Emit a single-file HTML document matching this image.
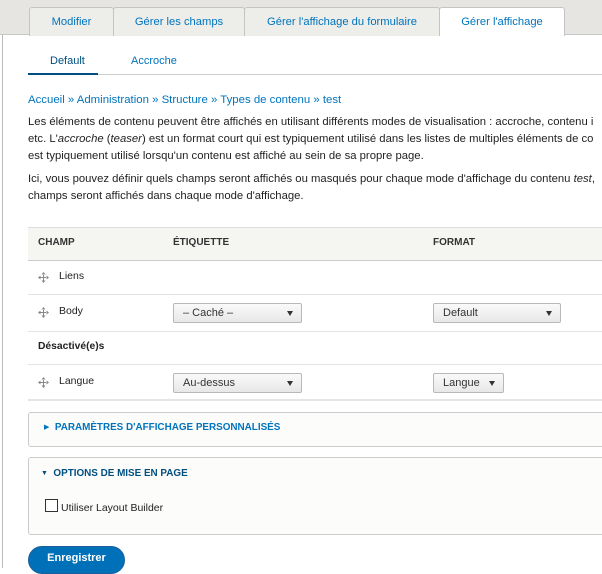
<!DOCTYPE html>
<html><head><meta charset="utf-8"><style>
*{box-sizing:border-box;margin:0;padding:0}
body{width:602px;height:568px;overflow:hidden;background:#fff;font-family:"Liberation Sans","DejaVu Sans",sans-serif;font-size:10.5px;color:#222;position:relative}
.a{position:absolute;white-space:nowrap}
.top{position:absolute;left:0;top:0;width:602px;height:35px;background:#e6e5e1;border-bottom:1px solid #c8c8c8}
.tab{position:absolute;top:7px;height:29px;border:1px solid #c4c4c4;border-bottom:none;background:#ededea;color:#0074bd;font-size:11.2px;text-align:center;line-height:28px;border-radius:3px 3px 0 0}
.tab.on{background:#fff;height:29px}
.blue{color:#0074bd}
.th{font-weight:bold;font-size:10px;color:#333}
.sel{position:absolute;height:20px;border:1px solid #b8b8b8;border-radius:2px;background:linear-gradient(#fafafa,#e8e8e8);font-size:11px;line-height:18px;padding-left:9px;color:#333}
.sel:after{content:"";position:absolute;right:8px;top:7px;border-left:3px solid transparent;border-right:3px solid transparent;border-top:5px solid #333}
.line{position:absolute;left:28px;width:574px;height:1px;background:#e2e2de}
.drag{position:absolute;width:11px;height:11px}
.box{position:absolute;left:28px;width:580px;border:1px solid #ccc;border-radius:3px;background:#fcfcfa}
</style></head><body>
<div class="a" style="left:2px;top:0;width:1px;height:568px;background:#bbb"></div>
<div class="top"></div>
<div class="tab" style="left:29px;width:85px">Modifier</div>
<div class="tab" style="left:113px;width:132px">Gérer les champs</div>
<div class="tab" style="left:244px;width:196px">Gérer l'affichage du formulaire</div>
<div class="tab on" style="left:439px;width:126px">Gérer l'affichage</div>

<div class="a" style="left:28px;top:74px;width:574px;height:1px;background:#ccc"></div>
<div class="a" style="left:28px;top:73px;width:70px;height:2px;background:#004f80"></div>
<div class="a" style="left:50px;top:55px;font-size:11px;color:#004f80">Default</div>
<div class="a blue" style="left:131px;top:55px;font-size:11px">Accroche</div>

<div class="a blue" style="left:28px;top:94px;font-size:11.4px">Accueil » Administration » Structure » Types de contenu » test</div>
<div class="a" style="left:28px;top:114px;line-height:17px;font-size:11.3px">Les éléments de contenu peuvent être affichés en utilisant différents modes de visualisation : accroche, contenu i<br>etc. L'<i>accroche</i> (<i>teaser</i>) est un format court qui est typiquement utilisé dans les listes de multiples éléments de co<br>est typiquement utilisé lorsqu'un contenu est affiché au sein de sa propre page.</div>
<div class="a" style="left:28px;top:171px;line-height:17px;font-size:11.3px">Ici, vous pouvez définir quels champs seront affichés ou masqués pour chaque mode d'affichage du contenu <i>test</i>,<br>champs seront affichés dans chaque mode d'affichage.</div>

<div class="a" style="left:28px;top:227px;width:574px;height:34px;background:#f5f5f2;border-top:1px solid #ddd;border-bottom:1px solid #ccc"></div>
<div class="a th" style="left:38px;top:237px">CHAMP</div>
<div class="a th" style="left:173px;top:237px">ÉTIQUETTE</div>
<div class="a th" style="left:433px;top:237px">FORMAT</div>

<svg class="drag" style="left:38px;top:272px" viewBox="0 0 11 11"><path d="M5.5 0L3.5 2.5H7.5ZM5.5 11L3.5 8.5H7.5ZM0 5.5L2.5 3.5V7.5ZM11 5.5L8.5 3.5V7.5ZM5 2h1v7H5ZM2 5h7v1H2Z" fill="#888"/></svg>
<div class="a" style="left:59px;top:270px">Liens</div>
<div class="line" style="top:294px"></div>
<svg class="drag" style="left:38px;top:307px" viewBox="0 0 11 11"><path d="M5.5 0L3.5 2.5H7.5ZM5.5 11L3.5 8.5H7.5ZM0 5.5L2.5 3.5V7.5ZM11 5.5L8.5 3.5V7.5ZM5 2h1v7H5ZM2 5h7v1H2Z" fill="#888"/></svg>
<div class="a" style="left:59px;top:305px">Body</div>
<div class="sel" style="left:173px;top:303px;width:129px">– Caché –</div>
<div class="sel" style="left:433px;top:303px;width:128px">Default</div>
<div class="line" style="top:331px"></div>
<div class="a" style="left:38px;top:341px;font-weight:bold;font-size:10.3px">Désactivé(e)s</div>
<div class="line" style="top:364px"></div>
<svg class="drag" style="left:38px;top:377px" viewBox="0 0 11 11"><path d="M5.5 0L3.5 2.5H7.5ZM5.5 11L3.5 8.5H7.5ZM0 5.5L2.5 3.5V7.5ZM11 5.5L8.5 3.5V7.5ZM5 2h1v7H5ZM2 5h7v1H2Z" fill="#888"/></svg>
<div class="a" style="left:59px;top:375px">Langue</div>
<div class="sel" style="left:173px;top:373px;width:129px">Au-dessus</div>
<div class="sel" style="left:433px;top:373px;width:71px">Langue</div>
<div class="line" style="top:399px;height:2px;background:#e6e5e1"></div>

<div class="box" style="top:412px;height:35px"></div>
<div class="a" style="left:44px;top:422px;font-size:9.9px;font-weight:bold;color:#0074bd"><span style="font-size:7px;position:relative;top:-1px">▶</span>&nbsp; PARAMÈTRES D'AFFICHAGE PERSONNALISÉS</div>
<div class="box" style="top:457px;height:78px"></div>
<div class="a" style="left:41px;top:468px;font-size:9.9px;font-weight:bold;color:#004f80"><span style="font-size:7px;position:relative;top:-1px">▼</span>&nbsp; OPTIONS DE MISE EN PAGE</div>
<div class="a" style="left:45px;top:499px;width:13px;height:13px;border:1px solid #333;background:#fff"></div>
<div class="a" style="left:61px;top:502px">Utiliser Layout Builder</div>

<div class="a" style="left:28px;top:546px;width:97px;height:28px;border-radius:14px;background:#0071b8;border:1px solid #1a5f9a;color:#fff;font-weight:bold;font-size:11px;text-align:center;line-height:22px">Enregistrer</div>
</body></html>
